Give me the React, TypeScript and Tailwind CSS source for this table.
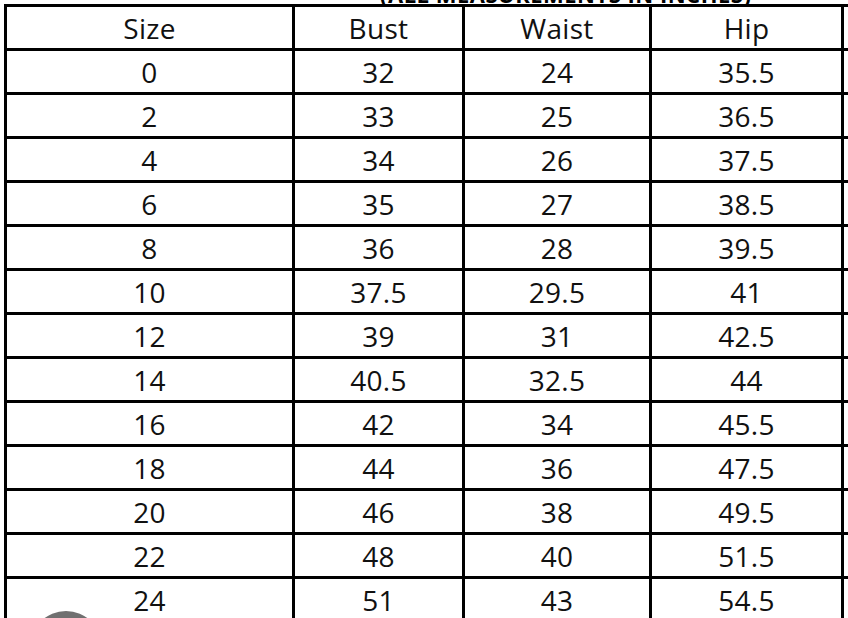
const header = ['Size', 'Bust', 'Waist', 'Hip'];

const rows = [
  ['0', '32', '24', '35.5'],
  ['2', '33', '25', '36.5'],
  ['4', '34', '26', '37.5'],
  ['6', '35', '27', '38.5'],
  ['8', '36', '28', '39.5'],
  ['10', '37.5', '29.5', '41'],
  ['12', '39', '31', '42.5'],
  ['14', '40.5', '32.5', '44'],
  ['16', '42', '34', '45.5'],
  ['18', '44', '36', '47.5'],
  ['20', '46', '38', '49.5'],
  ['22', '48', '40', '51.5'],
  ['24', '51', '43', '54.5'],
];

const Cell = ({ value }: { value: string }) => (
  <div className="bg-white flex items-center justify-center text-[28px] leading-none text-[#111] tracking-[0.3px]">
    {value}
  </div>
);

export default function App() {
  return (
    <div
      className="relative w-[848px] h-[618px] overflow-hidden bg-white"
      style={{ fontFamily: '"Open Sans", "Noto Sans", sans-serif' }}
    >
      {/* title, cut off at the top of the crop */}
      <div className="h-[4px] overflow-hidden flex items-end pl-[380px]">
        <span className="text-[22px] font-bold leading-[22px] -mb-[1px] whitespace-nowrap text-black tracking-[0.5px]">
          (ALL MEASUREMENTS IN INCHES)
        </span>
      </div>

      <div className="ml-[4px] w-[1000px] bg-black p-[3px] grid grid-cols-[285px_167px_184px_189px_1fr] auto-rows-[41px] gap-[3px]">
        {header.map((h) => (
          <Cell key={h} value={h} />
        ))}
        <div className="bg-white" />
        {rows.map((r) => (
          <>
            {r.map((v, i) => (
              <Cell key={r[0] + '-' + i} value={v} />
            ))}
            <div key={r[0] + '-x'} className="bg-white" />
          </>
        ))}
      </div>

      {/* floating button peeking in at the bottom */}
      <div className="absolute left-[30px] top-[611px] w-[72px] h-[72px] rounded-full bg-[#707070]" />
    </div>
  );
}
